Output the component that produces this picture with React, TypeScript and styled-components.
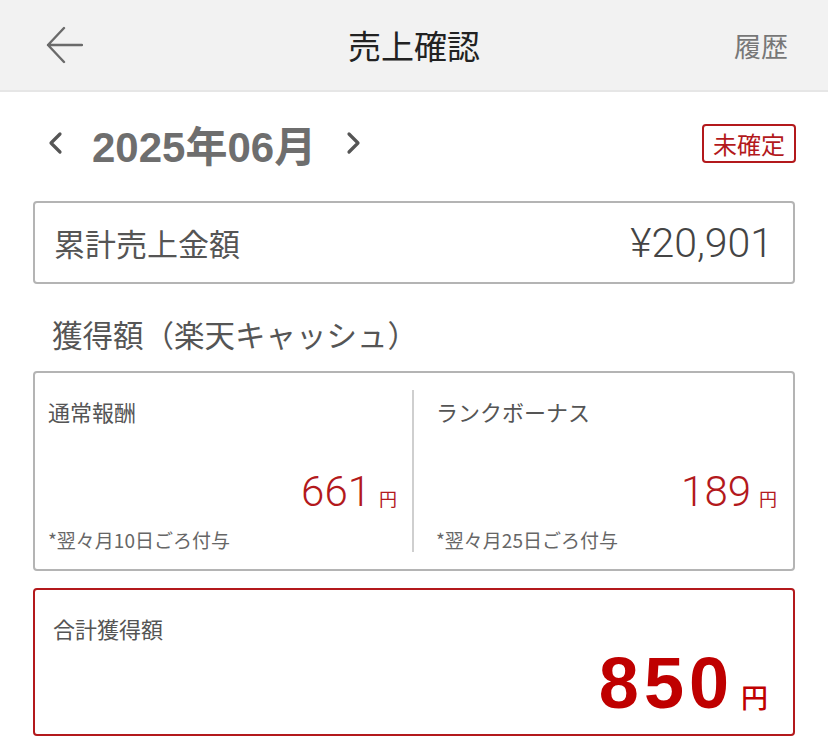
import styled, { createGlobalStyle } from "styled-components";

const GlobalStyle = createGlobalStyle`
  * { box-sizing: border-box; }
  body {
    margin: 0;
    background: #fff;
    font-family: "Noto Sans CJK JP", "Noto Sans", sans-serif;
    color: #444;
  }
`;

const RED = "#b3191c";

type Reward = {
  label: string;
  amount: string;
  note: string;
};

const rewards: Reward[] = [
  { label: "通常報酬", amount: "661", note: "*翌々月10日ごろ付与" },
  { label: "ランクボーナス", amount: "189", note: "*翌々月25日ごろ付与" },
];

export default function App() {
  return (
    <Page>
      <GlobalStyle />
      <Header>
        <BackButton aria-label="戻る">
          <svg width="38" height="38" viewBox="0 0 38 38" fill="none">
            <path
              d="M37 19H3M19 2L3 19L19 36"
              stroke="#6a6a6a"
              strokeWidth="2.4"
              strokeLinecap="round"
              strokeLinejoin="round"
            />
          </svg>
        </BackButton>
        <Title>売上確認</Title>
        <HistoryLink>履歴</HistoryLink>
      </Header>

      <Content>
        <MonthRow>
          <MonthNav>
            <Chevron $dir="left" />
            <MonthLabel>2025年06月</MonthLabel>
            <Chevron $dir="right" />
          </MonthNav>
          <StatusBadge>未確定</StatusBadge>
        </MonthRow>

        <SalesCard>
          <SalesLabel>累計売上金額</SalesLabel>
          <SalesValue>¥20,901</SalesValue>
        </SalesCard>

        <SectionTitle>獲得額（楽天キャッシュ）</SectionTitle>

        <RewardCard>
          {rewards.map((r, i) => (
            <RewardColumn key={r.label} $first={i === 0}>
              <RewardLabel>{r.label}</RewardLabel>
              <Amount>
                <AmountNumber>{r.amount}</AmountNumber>
                <Yen>円</Yen>
              </Amount>
              <Note>{r.note}</Note>
            </RewardColumn>
          ))}
        </RewardCard>

        <TotalCard>
          <RewardLabel>合計獲得額</RewardLabel>
          <TotalAmount>
            <TotalNumber>850</TotalNumber>
            <TotalYen>円</TotalYen>
          </TotalAmount>
        </TotalCard>
      </Content>
    </Page>
  );
}

function Chevron({ $dir }: { $dir: "left" | "right" }) {
  return (
    <ChevronIcon width="18" height="24" viewBox="0 0 18 24" fill="none">
      <path
        d={$dir === "left" ? "M13 3L4 12L13 21" : "M5 3L14 12L5 21"}
        stroke="#555"
        strokeWidth="3.2"
        strokeLinecap="round"
        strokeLinejoin="round"
      />
    </ChevronIcon>
  );
}

const Page = styled.div`
  width: 828px;
  min-height: 754px;
  background: #fff;
`;

const Header = styled.header`
  height: 92px;
  background: #f2f2f2;
  border-bottom: 2px solid #e6e6e6;
  display: flex;
  align-items: center;
  justify-content: space-between;
  padding: 0 40px 0 45px;
  position: relative;
`;

const BackButton = styled.button`
  border: none;
  background: none;
  padding: 0;
  display: flex;
  align-items: center;
  cursor: pointer;
`;

const Title = styled.h1`
  position: absolute;
  left: 0;
  right: 0;
  text-align: center;
  margin: 0;
  font-size: 33px;
  font-weight: 400;
  color: #222;
  pointer-events: none;
`;

const HistoryLink = styled.span`
  font-size: 27px;
  color: #777;
`;

const Content = styled.main`
  padding: 0 33px;
`;

const MonthRow = styled.div`
  display: flex;
  align-items: center;
  justify-content: space-between;
  height: 50px;
  margin-top: 26px;
`;

const MonthNav = styled.div`
  display: flex;
  align-items: center;
  padding-left: 14px;
`;

const ChevronIcon = styled.svg`
  display: block;
`;

const MonthLabel = styled.span`
  font-family: "Liberation Sans", "Noto Sans CJK JP", sans-serif;
  font-size: 42px;
  font-weight: 700;
  color: #6e6e6e;
  margin: 0 28px 0 27px;
`;

const StatusBadge = styled.span`
  border: 2px solid ${RED};
  border-radius: 4px;
  color: ${RED};
  font-size: 24px;
  line-height: 35px;
  padding: 0 9px;
  margin-right: -1px;
`;

const SalesCard = styled.section`
  margin-top: 33px;
  height: 83px;
  border: 2px solid #b4b4b4;
  border-radius: 4px;
  display: flex;
  align-items: center;
  justify-content: space-between;
  padding: 0 20px 0 19px;
`;

const SalesLabel = styled.span`
  font-size: 31px;
  color: #555;
`;

const SalesValue = styled.span`
  font-family: Roboto, "Noto Sans", sans-serif;
  font-size: 41px;
  font-weight: 300;
  color: #444;
`;

const SectionTitle = styled.h2`
  margin: 0;
  padding: 28px 0 0 19px;
  height: 87px;
  font-size: 30.5px;
  line-height: 44px;
  font-weight: 400;
  color: #555;
`;

const RewardCard = styled.section`
  height: 200px;
  border: 2px solid #b4b4b4;
  border-radius: 4px;
  display: grid;
  grid-template-columns: 1fr 1fr;
  padding: 17px 0;
`;

const RewardColumn = styled.div<{ $first: boolean }>`
  display: flex;
  flex-direction: column;
  padding: ${(p) => (p.$first ? "9px 15px 1px 13px" : "9px 16px 1px 22px")};
  border-right: ${(p) => (p.$first ? "2px solid #cfcfcf" : "none")};
`;

const RewardLabel = styled.div`
  font-size: 22px;
  line-height: 24px;
  color: #555;
`;

const Amount = styled.div`
  margin-top: auto;
  display: flex;
  align-items: baseline;
  justify-content: flex-end;
  color: ${RED};
`;

const AmountNumber = styled.span`
  font-family: Roboto, "Noto Sans", sans-serif;
  font-size: 42px;
  font-weight: 300;
  line-height: 46px;
`;

const Yen = styled.span`
  font-size: 18px;
  margin-left: 8px;
`;

const Note = styled.div`
  margin-top: 14px;
  font-size: 19px;
  line-height: 22px;
  color: #666;
`;

const TotalCard = styled.section`
  margin-top: 17px;
  height: 148px;
  border: 2px solid ${RED};
  border-radius: 4px;
  display: flex;
  flex-direction: column;
  padding: 26px 25px 16px 18px;
`;

const TotalAmount = styled.div`
  margin-top: auto;
  display: flex;
  align-items: baseline;
  justify-content: flex-end;
  color: #bf0000;
`;

const TotalNumber = styled.span`
  font-family: "Liberation Sans", Arial, sans-serif;
  font-size: 72px;
  font-weight: 700;
  line-height: 70px;
  letter-spacing: 5px;
`;

const TotalYen = styled.span`
  font-size: 27px;
  font-weight: 500;
  margin-left: 7px;
`;
